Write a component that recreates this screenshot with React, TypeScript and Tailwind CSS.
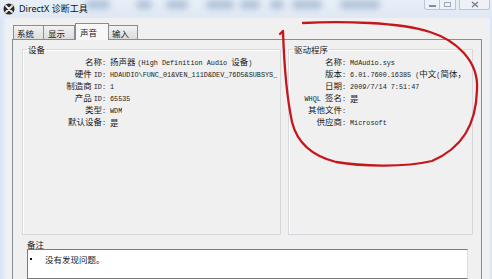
import React from "react";

const M = ({ children }: { children: React.ReactNode }) => (
  <span className="font-['Liberation_Mono'] text-[6.8px]">{children}</span>
);

function Row({ label, value, lw }: { label: React.ReactNode; value: React.ReactNode; lw: string }) {
  return (
    <div className="flex h-[12px] items-center whitespace-nowrap leading-[12px]">
      <div className={lw + " shrink-0 text-right"}>{label}</div>
      <div className="ml-[4px] min-w-0 overflow-hidden">{value}</div>
    </div>
  );
}

const blobs = [
  "left-[86px] w-[24px]",
  "left-[136px] w-[16px]",
  "left-[166px] w-[22px]",
  "left-[206px] w-[28px]",
  "left-[240px] w-[20px]",
  "left-[270px] w-[14px]",
  "left-[292px] w-[30px]",
  "left-[340px] w-[40px]",
];

export default function App() {
  return (
    <div className="relative w-[492px] h-[279px] overflow-hidden bg-[#e3ecf6] font-['Noto_Sans_CJK_SC','Noto_Sans',sans-serif] text-[8.5px] leading-none text-[#1a1a1a]">
      {/* title bar */}
      <div className="relative h-[18px] bg-gradient-to-b from-[#e8eff8] to-[#dfe8f3]">
        {blobs.map((b, i) => (
          <div key={i} className={"absolute top-[0px] h-[9px] rounded-[4px] bg-[#9fb4d0] opacity-75 blur-[3px] " + b} />
        ))}
        <div className="relative flex h-full items-center pl-[3px]">
          <svg width="12" height="12" viewBox="0 0 12 12" className="shrink-0">
            <circle cx="6" cy="6" r="5.5" fill="#2b2b2b" />
            <path d="M3 3 L9 9 M9 3 L3 9" stroke="#f2f2f2" strokeWidth="1.8" strokeLinecap="round" />
            <path d="M8.2 2.6 L9.6 1.6" stroke="#e6c229" strokeWidth="1.2" />
          </svg>
          <span className="ml-[4px] text-[9px] leading-[12px] text-[#111] font-['Noto_Sans','Noto_Sans_CJK_SC',sans-serif]">DirectX 诊断工具</span>
        </div>
        {/* window buttons */}
        <div className="absolute right-[2px] top-0 flex h-[10px]">
          <div className="flex w-[16px] items-end justify-center rounded-bl-[3px] border border-t-0 border-[#b9c6d6] bg-[#edf2f8] pb-[2px]">
            <div className="h-[2px] w-[7px] border border-[#7f8ea3]" />
          </div>
          <div className="flex w-[16px] items-center justify-center border border-l-0 border-t-0 border-[#b9c6d6] bg-[#edf2f8]">
            <div className="h-[5px] w-[7px] border border-[#9aa7b8]" />
          </div>
          <div className="ml-[3px] flex w-[31px] items-center justify-center rounded-br-[3px] border border-t-0 border-[#b9c6d6] bg-[#eef2f7]">
            <svg width="8" height="7" viewBox="0 0 8 7">
              <path d="M1 1 L7 6 M7 1 L1 6" stroke="#6f7d90" strokeWidth="1.4" />
            </svg>
          </div>
        </div>
      </div>

      {/* body */}
      <div className="flex h-[261px]">
        <div className="w-[8px] shrink-0 bg-gradient-to-r from-[#d6e4f2] to-[#eef3f9]" />
        <div className="flex flex-1 flex-col bg-[#f0f0f0] pl-[4px] pr-[6px] pt-[5px]">
          {/* tabs */}
          <div className="flex h-[16px] items-end pl-[1px]">
            <div className="flex h-[14px] w-[31px] items-center border border-b-0 border-[#898c95] bg-gradient-to-b from-[#f2f2f2] to-[#dcdcdc] pl-[3px] leading-[12px]">系统</div>
            <div className="flex h-[14px] w-[31px] items-center border border-b-0 border-l-0 border-[#898c95] bg-gradient-to-b from-[#f2f2f2] to-[#dcdcdc] pl-[4px] leading-[12px]">显示</div>
            <div className="relative z-10 -mb-[1px] flex h-[17px] w-[34px] items-center border border-b-0 border-[#898c95] bg-[#f7f7f7] pl-[4px] leading-[12px]">声音</div>
            <div className="flex h-[14px] w-[29px] items-center border border-b-0 border-l-0 border-[#898c95] bg-gradient-to-b from-[#f2f2f2] to-[#dcdcdc] pl-[3px] leading-[12px]">输入</div>
          </div>
          {/* panel */}
          <div className="flex flex-1 flex-col border border-b-0 border-[#898c95] bg-[#f0f0f0] pl-[9px] pt-[5px]">
            <div className="flex gap-[7px]">
              <fieldset className="h-[190px] w-[259px] border border-[#d5d9dd] shadow-[inset_1px_1px_0_#ffffff]">
                <legend className="ml-[4px] px-[1px]">设备</legend>
                <div className="pt-[2px] pr-[2px]">
                  <Row lw="w-[83px]" label={<>名称<M>:</M></>} value={<>扬声器 <M>(High Definition Audio </M>设备<M>)</M></>} />
                  <Row lw="w-[83px]" label={<>硬件 <M>ID:</M></>} value={<M>HDAUDIO\FUNC_01&amp;VEN_111D&amp;DEV_76D5&amp;SUBSYS_</M>} />
                  <Row lw="w-[83px]" label={<>制造商 <M>ID:</M></>} value={<M>1</M>} />
                  <Row lw="w-[83px]" label={<>产品 <M>ID:</M></>} value={<M>65535</M>} />
                  <Row lw="w-[83px]" label={<>类型<M>:</M></>} value={<M>WDM</M>} />
                  <Row lw="w-[83px]" label={<>默认设备<M>:</M></>} value={<>是</>} />
                </div>
              </fieldset>
              <fieldset className="h-[190px] w-[185px] border border-[#d5d9dd] shadow-[inset_1px_1px_0_#ffffff]">
                <legend className="ml-[4px] px-[1px]">驱动程序</legend>
                <div className="pt-[2px] pr-[2px]">
                  <Row lw="w-[57px]" label={<>名称<M>:</M></>} value={<M>MdAudio.sys</M>} />
                  <Row lw="w-[57px]" label={<>版本<M>:</M></>} value={<><M>6.01.7600.16385 (</M>中文<M>(</M>简体，</>} />
                  <Row lw="w-[57px]" label={<>日期<M>:</M></>} value={<M>2009/7/14 7:51:47</M>} />
                  <Row lw="w-[57px]" label={<><M>WHQL </M>签名<M>:</M></>} value={<>是</>} />
                  <Row lw="w-[57px]" label={<>其他文件<M>:</M></>} value={<></>} />
                  <Row lw="w-[57px]" label={<>供应商<M>:</M></>} value={<M>Microsoft</M>} />
                </div>
              </fieldset>
            </div>
            {/* notes */}
            <div className="ml-[5px] mt-[5px] flex flex-1 flex-col">
              <div className="h-[9px] leading-[9px]">备注</div>
              <div className="flex w-[441px] flex-1 items-start border border-[#7a7a7a] border-r-[#dcdcdc] bg-white pl-[2px] pt-[3px]">
                <div className="mt-[5px] h-[2px] w-[2px] shrink-0 bg-[#111]" />
                <div className="ml-[13px] leading-[12px]">没有发现问题。</div>
              </div>
            </div>
          </div>
        </div>
        <div className="w-[4px] shrink-0 bg-gradient-to-r from-[#eef3f9] to-[#d6e4f2]" />
      </div>

      {/* red hand-drawn circle */}
      <svg className="pointer-events-none absolute left-0 top-0" width="492" height="279" viewBox="0 0 492 279">
        <path
          d="M303 23 C340 21 400 22 430 32 C455 40 479 60 477 90 C476 125 462 148 432 161 C402 168 360 166 336 162 C312 156 297 142 292 122 C287 98 284 62 283 31 L280 34"
          fill="none"
          stroke="#c5161c"
          strokeWidth="2.3"
          strokeLinecap="round"
          strokeLinejoin="round"
        />
      </svg>
    </div>
  );
}
